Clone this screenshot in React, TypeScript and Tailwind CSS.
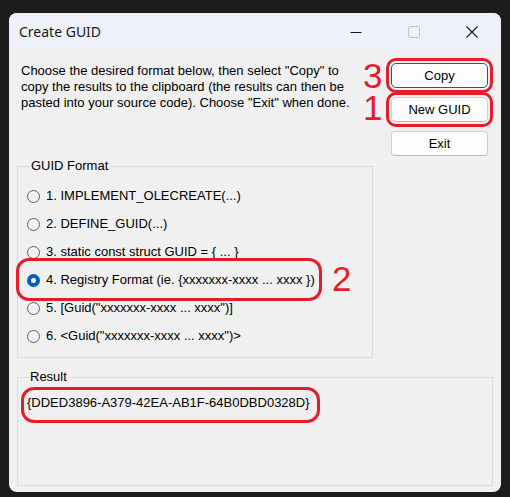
import { useState } from 'react';

const formats = [
  '1. IMPLEMENT_OLECREATE(...)',
  '2. DEFINE_GUID(...)',
  '3. static const struct GUID = { ... }',
  '4. Registry Format (ie. {xxxxxxx-xxxx ... xxxx })',
  '5. [Guid("xxxxxxx-xxxx ... xxxx")]',
  '6. <Guid("xxxxxxx-xxxx ... xxxx")>',
];

function Radio({ checked }: { checked: boolean }) {
  if (checked) {
    return (
      <span className="w-[13px] h-[13px] rounded-full bg-[#005fb8] flex items-center justify-center shrink-0">
        <span className="w-[5px] h-[5px] rounded-full bg-white" />
      </span>
    );
  }
  return <span className="w-[13px] h-[13px] rounded-full border border-[#5f5f5f] bg-[#f3f3f3] shrink-0" />;
}

function DlgButton({ label, isDefault, marked }: { label: string; isDefault?: boolean; marked?: boolean }) {
  return (
    <button
      className={`h-[25px] w-full rounded-[4px] bg-[#fdfdfd] text-[13px] text-black border ${
        isDefault ? 'border-[#005fb8]' : 'border-[#d0d0d0] border-b-[#b8b8b8]'
      } ${marked ? 'outline-[3px] outline-solid outline-[#e31e2a] outline-offset-[2px] rounded-[5px]' : ''}`}
    >
      {label}
    </button>
  );
}

export default function App() {
  const [selected, setSelected] = useState(3);

  return (
    <div
      className="w-[510px] h-[497px] bg-[#1c1c1c] pt-[13px] pl-[9px]"
      style={{ fontFamily: '"Liberation Sans", Arial, sans-serif' }}
    >
      <div className="w-[492px] h-[479px] rounded-[8px] overflow-hidden flex flex-col bg-[#f0f0f0]">
        {/* Title bar */}
        <div className="h-[37px] bg-[#eef1f9] flex items-center shrink-0">
          <span
            className="pl-[10px] text-[14px] text-[#1a1a1a] flex-1"
            style={{ fontFamily: '"Noto Sans", "Open Sans", sans-serif' }}
          >
            Create GUID
          </span>
          <div className="flex h-full">
            <div className="w-[58px] h-full flex items-center justify-center">
              <svg width="12" height="12" viewBox="0 0 12 12">
                <path d="M0.5 6.5H11.5" stroke="#1a1a1a" strokeWidth="1" />
              </svg>
            </div>
            <div className="w-[58px] h-full flex items-center justify-center">
              <svg width="12" height="12" viewBox="0 0 12 12">
                <rect x="0.5" y="0.5" width="11" height="11" rx="1.5" fill="none" stroke="#c4c4c4" strokeWidth="1" />
              </svg>
            </div>
            <div className="w-[58px] h-full flex items-center justify-center">
              <svg width="12" height="12" viewBox="0 0 12 12">
                <path d="M0.5 0.5L11.5 11.5M11.5 0.5L0.5 11.5" stroke="#1a1a1a" strokeWidth="1.1" />
              </svg>
            </div>
          </div>
        </div>

        {/* Body */}
        <div className="flex-1 px-[8px] pt-[13px] text-[13px] text-black">
          <div className="flex">
            <p className="flex-1 pl-[4px] leading-[16px] whitespace-pre-line">
              {'Choose the desired format below, then select "Copy" to\ncopy the results to the clipboard (the results can then be\npasted into your source code).  Choose "Exit" when done.'}
            </p>
            <div className="relative w-[97px] mr-[5px] flex flex-col gap-[9px]">
              <span className="absolute left-[-28px] top-[-2px] text-[35px] leading-[30px] text-[#e31e2a]">3</span>
              <span className="absolute left-[-28px] top-[30px] text-[35px] leading-[30px] text-[#e31e2a]">1</span>
              <DlgButton label="Copy" isDefault marked />
              <DlgButton label="New GUID" marked />
              <DlgButton label="Exit" />
            </div>
          </div>

          <fieldset className="mt-[2px] w-[356px] border border-[#dcdcdc] pl-[9px] pt-[8px] pb-[7px]">
            <legend className="ml-[3px] px-[1px] leading-[16px]">GUID Format</legend>
            {formats.map((f, i) => (
              <div
                key={f}
                className="h-[28px] flex items-center cursor-default"
                onClick={() => setSelected(i)}
              >
                <span className="relative flex items-center gap-[6px]">
                  <Radio checked={selected === i} />
                  <span className="whitespace-nowrap">{f}</span>
                  {i === 3 && (
                    <>
                      <span className="absolute left-[-11px] right-[-7px] top-[-12px] bottom-[-11px] rounded-[13px] border-[3px] border-[#e31e2a]" />
                      <span className="absolute left-[305px] top-[-9px] text-[35px] leading-none text-[#e31e2a]">2</span>
                    </>
                  )}
                </span>
              </div>
            ))}
          </fieldset>

          <fieldset className="mt-[11px] w-[476px] h-[117px] border border-[#dcdcdc] pl-[9px] pt-[8px]">
            <legend className="ml-[2px] px-[1px] leading-[16px]">Result</legend>
            <span className="relative inline-block leading-[16px]">
              {'{DDED3896-A379-42EA-AB1F-64B0DBD0328D}'}
              <span className="absolute left-[-6px] right-[-10px] top-[-8px] bottom-[-12px] rounded-[13px] border-[3px] border-[#e31e2a]" />
            </span>
          </fieldset>
        </div>
      </div>
    </div>
  );
}
